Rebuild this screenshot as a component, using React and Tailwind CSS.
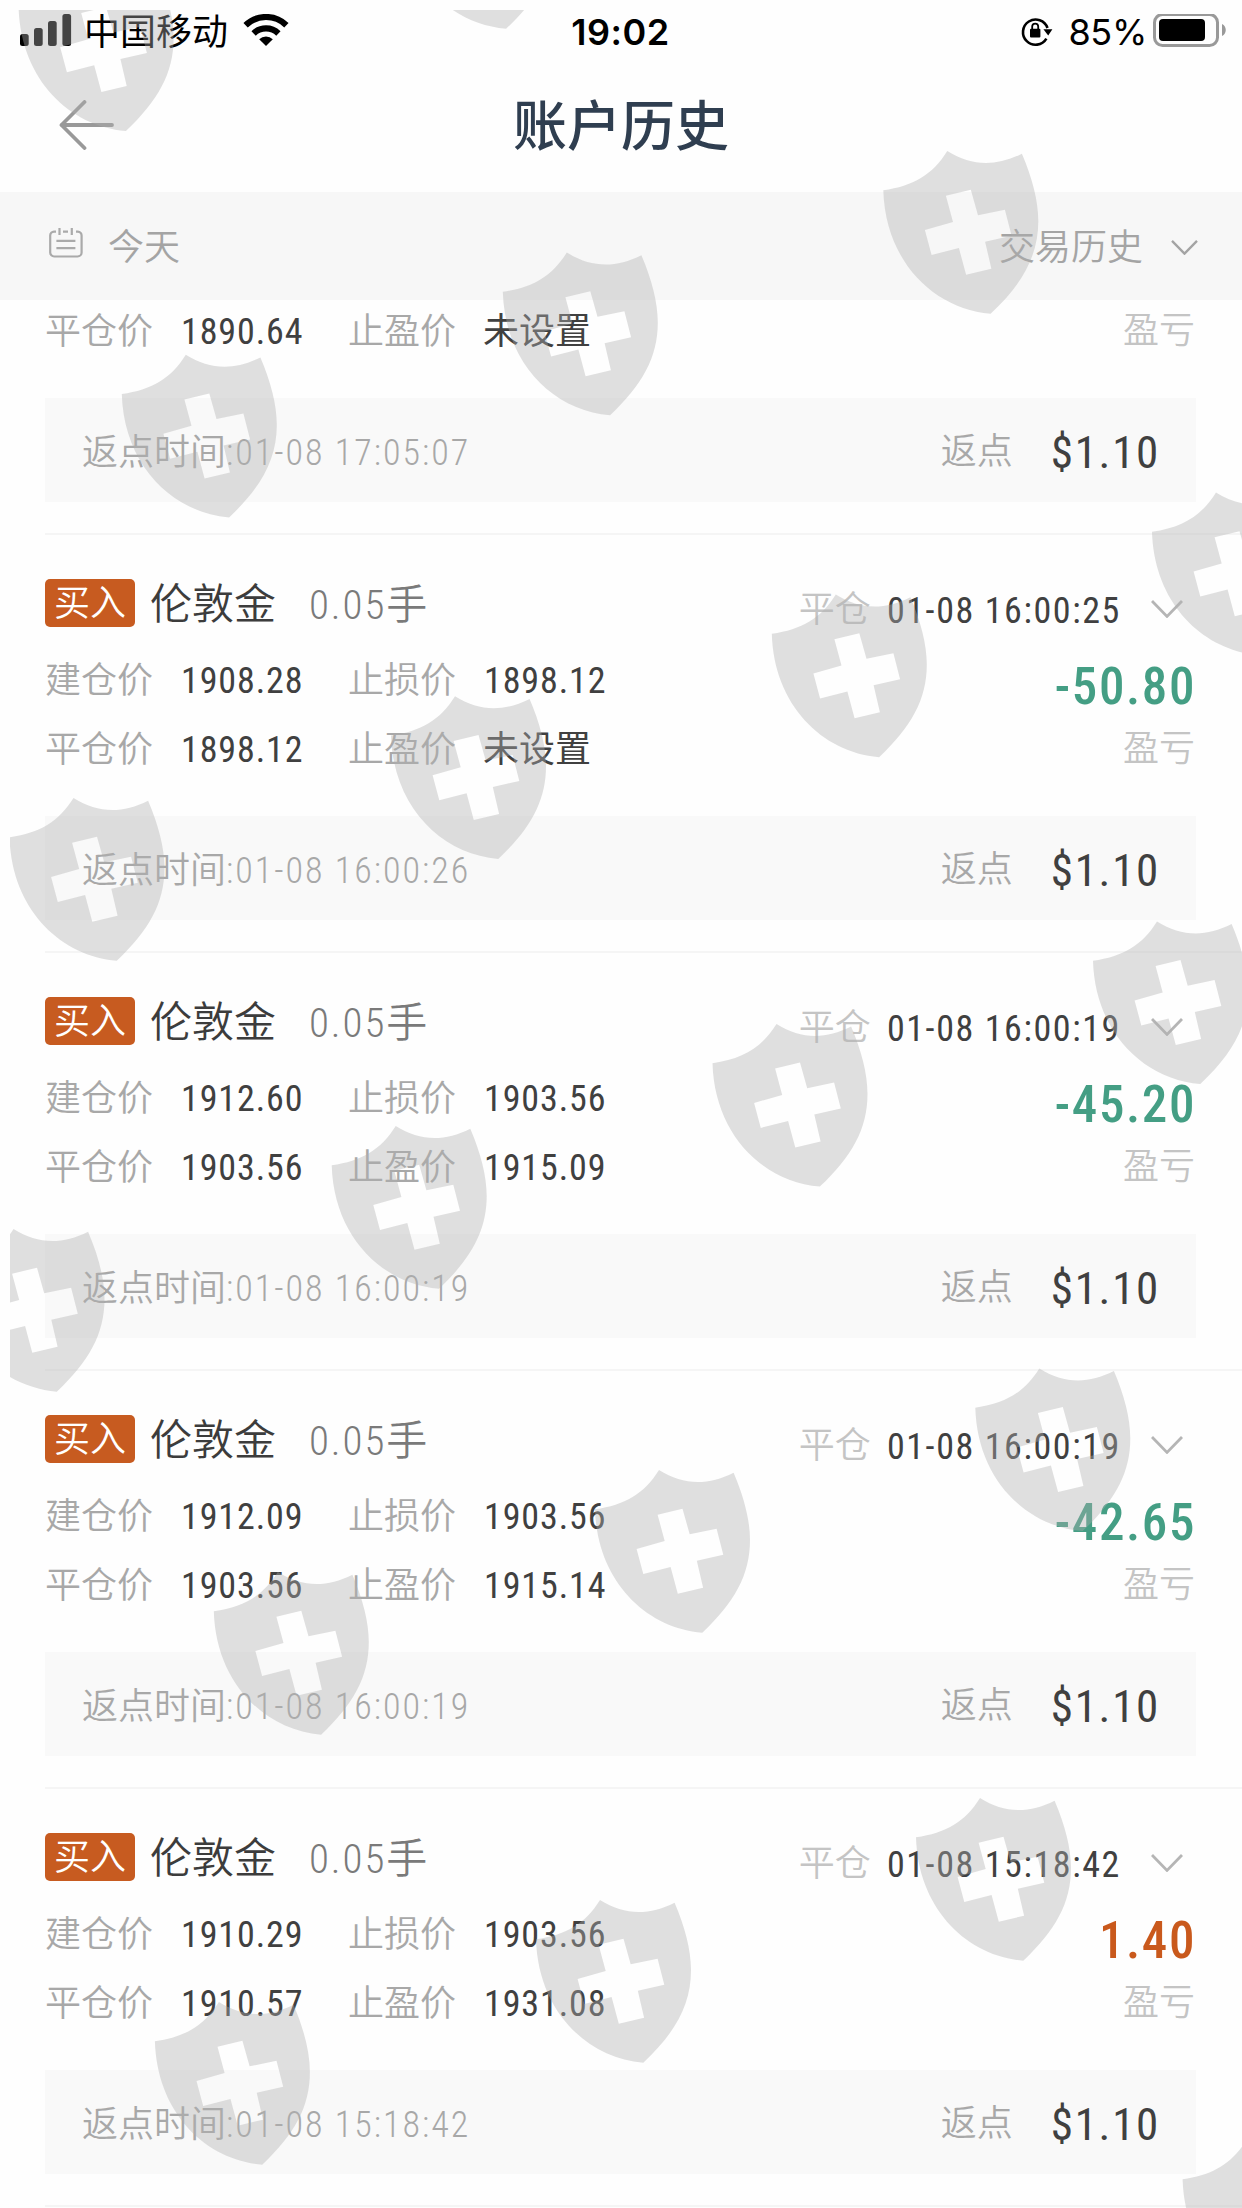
const trades = [
  {
    open: '1908.28',
    stopLoss: '1898.12',
    close: '1898.12',
    takeProfit: '未设置',
    closedAt: '01-08 16:00:25',
    profit: '-50.80',
    rebateAt: '01-08 16:00:26',
  },
  {
    open: '1912.60',
    stopLoss: '1903.56',
    close: '1903.56',
    takeProfit: '1915.09',
    closedAt: '01-08 16:00:19',
    profit: '-45.20',
    rebateAt: '01-08 16:00:19',
  },
  {
    open: '1912.09',
    stopLoss: '1903.56',
    close: '1903.56',
    takeProfit: '1915.14',
    closedAt: '01-08 16:00:19',
    profit: '-42.65',
    rebateAt: '01-08 16:00:19',
  },
  {
    open: '1910.29',
    stopLoss: '1903.56',
    close: '1910.57',
    takeProfit: '1931.08',
    closedAt: '01-08 15:18:42',
    profit: '1.40',
    rebateAt: '01-08 15:18:42',
  },
]

// top-left corner of every shield
const shields = [
  [18.6, -31.7],
  [398.8, -134],
  [883.3, 151],
  [502.8, 252.5],
  [121.8, 354.7],
  [1152, 492.5],
  [771.8, 594.5],
  [391, 696.2],
  [9.5, 798],
  [1093, 921.4],
  [712.5, 1023.9],
  [331.7, 1126],
  [-50.5, 1229],
  [975.3, 1368.4],
  [595, 1470],
  [213.8, 1572],
  [916, 1798],
  [536, 1900],
  [154.9, 2002],
  [1182.6, 2140],
]

function Watermark() {
  return (
    <svg
      viewBox="0 0 1242 2208"
      aria-hidden="true"
      className="pointer-events-none absolute inset-0 h-[2208px] w-[1242px]"
    >
      <defs>
        <clipPath id="edge">
          <rect x="10" y="10" width="1232" height="2198" />
        </clipPath>
        <path
          id="shield"
          fillRule="evenodd"
          d="M0 39.3C30 35 49 24 64 0C88 15 112 16 138.6 2.7C149 27 155 50 155 70C155 105 139 133 107.3 162.7C50 158 2 110 0 39.3Z M62.6 44.7L87.5 38.7L94.7 64.3L121.6 58.7L128.3 84.7L101.8 90.7L108.1 117.7L82.8 123.7L75.6 97L48.3 104L41.6 79L69.7 71Z"
        />
      </defs>
      <g clipPath="url(#edge)" fill="#afafaf" fillOpacity="0.39">
        {shields.map(([x, y]) => (
          <use key={`${x}-${y}`} href="#shield" x={x} y={y} />
        ))}
      </g>
    </svg>
  )
}

function SignalIcon() {
  return (
    <svg viewBox="0 0 52 34" aria-hidden="true" className="h-[34px] w-[52px]">
      <rect x="0" y="20" width="8.7" height="12" rx="2.5" />
      <rect x="14" y="14" width="8.7" height="18" rx="2.5" />
      <rect x="28" y="7" width="8.7" height="25" rx="2.5" />
      <rect x="42.4" y="0" width="8.7" height="32" rx="2.5" />
    </svg>
  )
}

function WifiIcon() {
  return (
    <svg viewBox="0 0 46 34" aria-hidden="true" className="h-[34px] w-[46px]">
      <g fill="none" stroke="#000" strokeWidth="6.2">
        <path d="M2.6 11.2A29.5 29.5 0 0 1 43.4 11.2" />
        <path d="M10.6 19.4A18 18 0 0 1 35.4 19.4" />
      </g>
      <path d="M23 32L16.2 25.3A9.8 9.8 0 0 1 29.8 25.3Z" />
    </svg>
  )
}

function RotationLockIcon() {
  return (
    <svg viewBox="0 0 32 32" aria-hidden="true" className="h-8 w-8">
      <path fill="none" stroke="#000" strokeWidth="2.6" d="M25.4 23.6A12.6 12.6 0 1 1 26.5 13" />
      <path d="M22.4 14.2H31.4L27.2 20.6Z" />
      <rect x="9" y="13.8" width="10.4" height="8.8" rx="1" />
      <path fill="none" stroke="#000" strokeWidth="1.8" d="M11.2 14.5V11.6A3 3 0 0 1 17.2 11.6V14.5" />
    </svg>
  )
}

function BatteryIcon() {
  return (
    <svg viewBox="0 0 74 34" aria-hidden="true" className="h-[34px] w-[74px]">
      <rect x="1.5" y="0.5" width="63" height="31" rx="8" fill="none" stroke="#999" strokeWidth="3" />
      <rect x="6" y="5" width="46" height="22" rx="4" />
      <path fill="#999" d="M69 10C74 12 74 20 69 22Z" />
    </svg>
  )
}

function CalendarIcon() {
  return (
    <svg viewBox="0 0 34 32" aria-hidden="true" className="mb-2.5 h-8 w-[34px]">
      <g fill="none" stroke="#aaa" strokeWidth="2.2">
        <path d="M7 4.6H5A4 4 0 0 0 1.2 8.6V25.5A4 4 0 0 0 5.2 29.5H28.6A4 4 0 0 0 32.6 25.5V8.6A4 4 0 0 0 28.8 4.6H27M14 4.6H19" />
        <path d="M10.5 1V8M22.8 1V8M7.4 13.8H26.4M7.4 21.2H26.4" />
      </g>
    </svg>
  )
}

function ChevronDown({ className }) {
  return (
    <svg viewBox="0 0 32 18" aria-hidden="true" className={className}>
      <path fill="none" stroke="currentColor" strokeWidth="2.8" d="M1 1L16 16.4L31 1" />
    </svg>
  )
}

function StatusBar() {
  return (
    <div className="grid h-[62px] grid-cols-3 items-center pr-[15px] pl-5 font-['Inter','Noto_Sans_CJK_SC',sans-serif] text-4xl text-black">
      <div className="flex items-center">
        <SignalIcon />
        <span className="ml-3 pt-0.5 leading-none">中国移动</span>
        <span className="ml-[15px]">
          <WifiIcon />
        </span>
      </div>
      <div className="pt-px pr-1.5 text-center font-semibold tracking-[0.5px]">19:02</div>
      <div className="flex items-center justify-end">
        <RotationLockIcon />
        <span className="ml-[15px] pt-px tracking-[-0.3px]">85%</span>
        <span className="ml-[6px]">
          <BatteryIcon />
        </span>
      </div>
    </div>
  )
}

function Price({ label, value, className }) {
  const unset = value === '未设置'

  return (
    <div className={`flex items-center ${className}`}>
      <span className="w-[135px] text-[#a8a8a8]">{label}</span>
      <span className={`font-normal text-[#404040] ${unset ? '' : 'pl-px tracking-[0.9px]'}`}>{value}</span>
    </div>
  )
}

function Rebate({ time }) {
  return (
    <div className="flex h-[104px] items-center justify-between bg-[#f9f9f9] pt-[5px] pr-[36px] pl-[37px] text-[#a8a8a8]">
      <span>
        返点时间<span className="tracking-[2px]">:{time}</span>
      </span>
      <div className="flex items-center">
        <span className="pb-0.5">返点</span>
        <span className="ml-[38px] text-[45px] font-normal tracking-[1.7px] text-[#404040]">$1.10</span>
      </div>
    </div>
  )
}

// last visible lines of the trade that is scrolled under the filter bar
function ScrolledTrade() {
  return (
    <article className="ml-[45px] h-[235px] shrink-0 border-b-2 border-[#f5f5f5] pr-[46px] text-4xl font-[350]">
      <div className="flex h-[98px] justify-between">
        <div className="flex h-16">
          <Price className="w-[303px]" label="平仓价" value="1890.64" />
          <Price label="止盈价" value="未设置" />
        </div>
        <div className="pt-[7px] pr-px leading-12 text-[#c4c4c4]">盈亏</div>
      </div>
      <Rebate time="01-08 17:05:07" />
    </article>
  )
}

function Trade({ trade }) {
  const loss = trade.profit.startsWith('-')

  return (
    <article className="ml-[45px] h-[418px] shrink-0 border-b-2 border-[#f5f5f5] pr-[46px] text-4xl font-[350]">
      <div className="flex h-[281px] justify-between">
        <div className="pt-11">
          <div className="flex h-12 items-center">
            <span className="flex h-12 w-[90px] items-center justify-center rounded-[5px] bg-[#c75b20] pt-0.5 text-white">
              买入
            </span>
            <span className="ml-[15px] pt-1 text-[42px] text-[#3c3c3c]">伦敦金</span>
            <span className="ml-[33px] pt-1.5 text-[41px] text-[#7a7a7a]">
              <span className="tracking-[1.9px]">0.05</span>手
            </span>
          </div>
          <div className="mt-[19px] flex h-[69px]">
            <Price className="w-[303px]" label="建仓价" value={trade.open} />
            <Price label="止损价" value={trade.stopLoss} />
          </div>
          <div className="flex h-[70px]">
            <Price className="w-[303px]" label="平仓价" value={trade.close} />
            <Price label="止盈价" value={trade.takeProfit} />
          </div>
        </div>

        <div className="flex flex-col items-end pt-[50px]">
          <div className="flex h-12 items-center pr-[13px]">
            <span className="pt-px text-[#c4c4c4]">平仓</span>
            <span className="ml-4 pt-[3px] font-normal tracking-[1.6px] text-[#404040]">{trade.closedAt}</span>
            <ChevronDown className="ml-[30px] h-[18px] w-8 text-[#b5b5b5]" />
          </div>
          <div
            className={`mt-[19px] flex h-[70px] items-center text-[51px] font-medium tracking-[1.6px] ${loss ? 'text-[#449e84]' : 'text-[#c9591c]'}`}
          >
            {trade.profit}
          </div>
          <div className="mt-[3px] pr-px leading-12 text-[#c4c4c4]">盈亏</div>
        </div>
      </div>

      <Rebate time={trade.rebateAt} />
    </article>
  )
}

function App() {
  return (
    <div className="relative flex h-[2208px] w-[1242px] flex-col overflow-hidden bg-[#fefefe] font-['Roboto_Condensed','Noto_Sans_CJK_SC',sans-serif]">
      <StatusBar />

      <header className="grid h-[130px] grid-cols-3 items-center px-[59px]">
        <svg viewBox="0 0 56 50" aria-hidden="true" className="mb-1 h-[50px] w-14">
          <path
            fill="none"
            stroke="#999"
            strokeWidth="3.8"
            strokeLinecap="round"
            strokeLinejoin="round"
            d="M25.5 2L2.5 25L25.5 48M2.5 25H53"
          />
        </svg>
        <h1 className="pt-0.5 text-center text-[54px] leading-none font-medium text-[#2f3e50]">账户历史</h1>
      </header>

      <div className="flex h-[108px] shrink-0 items-center justify-between bg-[#f7f7f7] pt-[3px] pr-11 pl-[49px] text-4xl font-[350] text-[#a4a4a4]">
        <div className="flex items-center">
          <CalendarIcon />
          <span className="ml-[25px]">今天</span>
        </div>
        <div className="flex items-center">
          <span>交易历史</span>
          <ChevronDown className="ml-7 h-[15px] w-[27px]" />
        </div>
      </div>

      <main className="flex min-h-0 flex-1 flex-col overflow-hidden">
        <ScrolledTrade />
        {trades.map((trade) => (
          <Trade key={trade.open} trade={trade} />
        ))}
      </main>

      <Watermark />
    </div>
  )
}

export default App
